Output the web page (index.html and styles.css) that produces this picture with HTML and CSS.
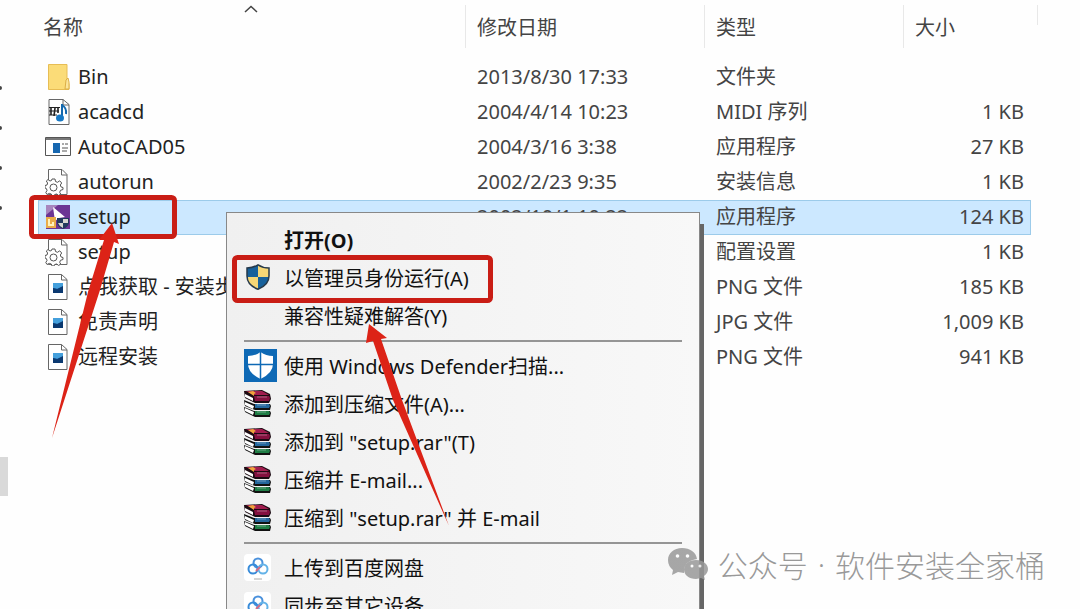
FILE: index.html
```html
<!DOCTYPE html>
<html lang="zh-CN">
<head>
    <meta charset="UTF-8">
    <meta name="viewport" content="width=device-width">
    <title>setup</title>
    <link rel="stylesheet" href="styles.css">
</head>
<body>
<svg class="defs" aria-hidden="true">
    <symbol id="gear" viewBox="0 0 26 28">
        <path d="M3.500 1.500h13.500l5 5V26.500H3.500z" fill="#fff" stroke="#666"/>
        <path d="M16.500 1.500v5.500H22" fill="none" stroke="#666"/>
        <path d="M7 11h3l.5 2.500 2 .8 2.200-1.500 2 2.200-1.400 2 .8 2L18 19.500v2l-2.500.8-.8 2 1 1.700-2 1.500-2-1.500-2 .5L9 28H7l-.7-2-2-.6L2 26.500.8 24.500 2 22.500l-.5-1.800L0 20v-2.500l2-.5.6-2-1.300-2L3 11.500l2 1.500 1.500-.5z" fill="#fff" stroke="#555"/>
        <circle cx="8.500" cy="19.500" r="3.500" fill="#fff" stroke="#555"/>
    </symbol>
    <symbol id="picture" viewBox="0 0 26 28">
        <path d="M3.500 1.500h13l5.500 5V26.500H3.500z" fill="#fff" stroke="#666"/>
        <path d="M16.500 1.500v5.500H22" fill="none" stroke="#666"/>
        <path d="M8 10h10v10H8z" fill="#1765ad"/>
        <path d="M8 10h10v4l-5 2-5-1z" fill="#45a0dc"/>
        <path d="M8 15l4 1 6-3v7H8z" fill="#0b3970"/>
    </symbol>
    <symbol id="books" viewBox="0 0 27 27">
        <path d="M0 17l10 4h16l1 2-1 4H11L1 22z" fill="#111"/>
        <path d="M11 21h14l1 2-1 2H11z" fill="#1f7d45"/>
        <path d="M1 18l9 4-1 3-8-4z" fill="#fff"/>
        <path d="M0 10l10 4h16l1 2-1 4H11L1 16z" fill="#111"/>
        <path d="M11 14h14l1 2-1 2H11z" fill="#24679c"/>
        <path d="M1 12l9 4-1 3-8-4z" fill="#fff"/>
        <path d="M0 1l18-1 8 4 1 5-2 4H11L1 8z" fill="#1b0a12"/>
        <path d="M2 1l16 0 7 4H10z" fill="#a01c4e"/>
        <path d="M10 6h15l1 2-1 3H11z" fill="#84103f"/>
        <path d="M1 4l8 4v3L1 7z" fill="#fff"/>
        <path d="M4 2l5-1 3 2-2 1v2L7 4z" fill="#f0a33c"/>
        <path d="M13 7h10M13 15h9M13 22h9" stroke="#fff" stroke-opacity=".35"/>
    </symbol>
    <symbol id="cloud" viewBox="0 0 27 27">
        <rect width="27" height="27" rx="4" fill="#fff"/>
        <g fill="none" stroke-width="2">
            <circle cx="14" cy="9" r="4.500" stroke="#4a91dc"/>
            <circle cx="9" cy="15" r="4.500" stroke="#378bd9"/>
            <circle cx="19" cy="15" r="4.500" stroke="#64b3e8"/>
            <path d="M12 17l4-4" stroke="#d66b84"/>
        </g>
        <path d="M10 25h8" stroke="#aaa"/>
    </symbol>
</svg>

<div id="app">
    <aside class="nav-edge">
        <span class="pin"></span>
        <span class="pin"></span>
        <span class="pin"></span>
        <span class="pin"></span>
        <span class="thumb"></span>
    </aside>
    <main class="files">
        <table class="file-table">
            <thead>
            <tr>
                <th class="col-name" scope="col">名称
                    <svg class="sort" viewBox="0 0 14 8"><path d="M1 7l6-5.500L13 7" fill="none" stroke="#444" stroke-width="1.500"/></svg>
                </th>
                <th class="col-date" scope="col">修改日期</th>
                <th class="col-type" scope="col">类型</th>
                <th class="col-size" scope="col">大小</th>
            </tr>
            </thead>
            <tbody>
            <tr>
                <td><div class="name">
                    <svg class="icon" viewBox="0 0 26 28"><path d="M3.500 1.500H22v18l2 1v6H3.500z" fill="#fbdc78" stroke="#e7bd54"/><path d="M20 26l1-9 2-2 1 4v7z" fill="#fbe59a" stroke="#dcae45"/></svg>
                    Bin</div></td>
                <td>2013/8/30 17:33</td><td>文件夹</td><td></td>
            </tr>
            <tr>
                <td><div class="name">
                    <svg class="icon" viewBox="0 0 26 28"><path d="M4 1.500h14l6 5V26.500H4z" fill="#fff" stroke="#666"/><path d="M18 1.500V7h6" fill="none" stroke="#666"/><path d="M4 9.500h11M4 13h10M4 17h8" stroke="#222" stroke-width="1.200"/><path d="M6 9v8M10 10l-1 8M13 9v6" stroke="#222" stroke-width="1.600"/><path d="M17 6v15M17 7q5 3 4 9" fill="none" stroke="#1468ad" stroke-width="2"/><ellipse cx="15" cy="20" rx="4" ry="3.500" fill="#1879c5"/></svg>
                    acadcd</div></td>
                <td>2004/4/14 10:23</td><td>MIDI 序列</td><td>1 KB</td>
            </tr>
            <tr>
                <td><div class="name">
                    <svg class="icon" viewBox="0 0 26 28"><path d="M.5 4.500h25v18H.5z" fill="#fff" stroke="#555"/><path d="M1 6h24" stroke="#777" stroke-width="2"/><path d="M8 10h7v10H8z" fill="#1767b0"/><path d="M17 11h2M20 11h3M17 15h6M17 18h5" stroke="#555"/></svg>
                    AutoCAD05</div></td>
                <td>2004/3/16 3:38</td><td>应用程序</td><td>27 KB</td>
            </tr>
            <tr>
                <td><div class="name"><svg class="icon"><use href="#gear"/></svg>autorun</div></td>
                <td>2002/2/23 9:35</td><td>安装信息</td><td>1 KB</td>
            </tr>
            <tr class="selected">
                <td><div class="name">
                    <svg class="icon" viewBox="0 0 26 28"><path d="M1 2h24v24H1z" fill="#6c3594"/><path d="M1 2h12L1 12z" fill="#a785be"/><path d="M8 4l12 10-6 1-4 3z" fill="#fff"/><path d="M1 14h10v11H1z" fill="#e9ac49"/><path d="M4 16v6h4v-3" fill="none" stroke="#fff2bc" stroke-width="2"/><path d="M12 15h12v5q-1 4-6 6-5-2-6-6z" fill="#223a5d"/><path d="M18 16h5v4h-5zM13 20h5v5q-4-2-5-5z" fill="#d8d7d1"/></svg>
                    setup</div></td>
                <td>2002/10/1 10:22</td><td>应用程序</td><td>124 KB</td>
            </tr>
            <tr>
                <td><div class="name"><svg class="icon"><use href="#gear"/></svg>setup</div></td>
                <td></td><td>配置设置</td><td>1 KB</td>
            </tr>
            <tr>
                <td><div class="name"><svg class="icon"><use href="#picture"/></svg>点我获取 - 安装步骤</div></td>
                <td></td><td>PNG 文件</td><td>185 KB</td>
            </tr>
            <tr>
                <td><div class="name"><svg class="icon"><use href="#picture"/></svg>免责声明</div></td>
                <td></td><td>JPG 文件</td><td>1,009 KB</td>
            </tr>
            <tr>
                <td><div class="name"><svg class="icon"><use href="#picture"/></svg>远程安装</div></td>
                <td></td><td>PNG 文件</td><td>941 KB</td>
            </tr>
            </tbody>
        </table>
    </main>

    <div class="menu" role="menu">
        <button class="item default" role="menuitem"><span class="item-icon"></span>打开(O)</button>
        <button class="item" role="menuitem">
            <span class="item-icon"><svg class="shield" viewBox="0 0 24 26"><path d="M12 .8Q17 4 23 4v8q0 9-11 13.200Q1 21 1 12V4q6 0 11-3.200z" fill="#f6d776"/><path d="M12 1v12H1V4q6 0 11-3zM12 13h11q-1 8-11 12z" fill="#17619b"/><path d="M12 .8Q17 4 23 4v8q0 9-11 13.200Q1 21 1 12V4q6 0 11-3.200z" fill="none" stroke="#26394a" stroke-width="1.500"/></svg></span>以管理员身份运行(A)
        </button>
        <button class="item" role="menuitem"><span class="item-icon"></span>兼容性疑难解答(Y)</button>
        <hr class="line">
        <button class="item" role="menuitem">
            <span class="item-icon"><svg class="defender" viewBox="0 0 33 33"><path d="M0 0h33v33H0z" fill="#0e69b5"/><path d="M16.500 3Q22 7 29 7v8q0 9-12.500 15Q4 24 4 15V7q7 0 12.500-4z" fill="#fff"/><path d="M16.500 3v27M3 15.500h27" stroke="#0e69b5" stroke-width="1.500"/></svg></span>使用 Windows Defender扫描...
        </button>
        <button class="item" role="menuitem"><span class="item-icon"><svg class="app"><use href="#books"/></svg></span>添加到压缩文件(A)...</button>
        <button class="item" role="menuitem"><span class="item-icon"><svg class="app"><use href="#books"/></svg></span>添加到 "setup.rar"(T)</button>
        <button class="item" role="menuitem"><span class="item-icon"><svg class="app"><use href="#books"/></svg></span>压缩并 E-mail...</button>
        <button class="item" role="menuitem"><span class="item-icon"><svg class="app"><use href="#books"/></svg></span>压缩到 "setup.rar" 并 E-mail</button>
        <hr class="line">
        <button class="item" role="menuitem"><span class="item-icon"><svg class="app"><use href="#cloud"/></svg></span>上传到百度网盘</button>
        <button class="item" role="menuitem"><span class="item-icon"><svg class="app"><use href="#cloud"/></svg></span>同步至其它设备</button>
    </div>

    <!-- red marks over the list and the menu -->
    <svg class="marks" width="500" height="540" aria-hidden="true">
        <g fill="none" stroke="#c91d15" stroke-width="5">
            <rect x="31.500" y="197.500" width="143" height="39" rx="3"/>
            <rect x="234.500" y="257.500" width="256" height="43" rx="3"/>
        </g>
        <g fill="#dc2317">
            <path d="M112 223L99 240L104 240L88 292L52 438L100 290L114 242L119 244z"/>
            <path d="M369 324L366 343L373 341L393 400L449 526L402 400L381 339L387 338z"/>
        </g>
    </svg>

    <div class="watermark">
        <svg class="wechat" viewBox="0 0 40 34"><path d="M14 1C6 1 0 6 0 13q0 6 5 10l-1 5 6-3 6 1q-1-12 13-14C28 5 22 1 14 1z"/><path d="M28 13c-7 0-12 4-12 9.500S21 32 28 32l5-1 4 2-1-4q4-3 4-7c0-5-5-9-12-9z"/><g fill="#fff"><circle cx="9.500" cy="9" r="1.800"/><circle cx="19.500" cy="9" r="1.800"/><circle cx="24" cy="19" r="1.500"/><circle cx="32" cy="19" r="1.500"/></g></svg>
        <span>公众号</span><span class="dot">·</span><span>软件安装全家桶</span>
    </div>
</div>
</body>
</html>
```
FILE: styles.css
```css
*{
    margin: 0;
    padding: 0;
    box-sizing: border-box;
}
html,body,#app{
    width: 100%;
    height: 100%;
    overflow: hidden;
}
body{
    background-color: #fefefe;
    color: #222;
    font-family: "Noto Sans", "Noto Sans CJK SC", sans-serif;
    font-size: 20px;
}
#app{
    position: relative;
    display: flex;
}
.defs{
    position: absolute;
    width: 0;
    height: 0;
}
/* edge of the navigation pane */
.nav-edge{
    width: 8px;
    padding-top: 86px;
    display: flex;
    flex-direction: column;
    gap: 36px;
}
.pin{
    width: 2px;
    height: 4px;
    border-radius: 0 2px 2px 0;
    background-color: #444;
}
.thumb{
    margin-top: 211px;
    height: 39px;
    background-color: #d9d9d9;
}
.files{
    flex: 1;
    padding: 0 49px 0 30px;
}
.file-table{
    width: 100%;
    table-layout: fixed;
    border-collapse: collapse;
    white-space: nowrap;
}
.file-table th{
    position: relative;
    height: 60px;
    padding: 0 0 8px 11px;
    font-weight: normal;
    text-align: left;
    color: #444;
}
.file-table th::after{
    content: "";
    position: absolute;
    top: 5px;
    right: 0;
    width: 1px;
    height: 43px;
    background-color: #e8e8e8;
}
.file-table .col-name{
    padding-left: 5px;
}
.col-date{
    width: 239px;
}
.col-type{
    width: 199px;
}
.col-size{
    width: 127px;
}
.file-table .col-size::after{
    right: -7px;
    height: 20px;
}
.sort{
    position: absolute;
    top: 5px;
    left: 50%;
    width: 14px;
    height: 8px;
    margin-left: -8px;
}
.file-table td{
    height: 35px;
    padding: 0 0 2px 11px;
    line-height: 33px;
    color: #444;
}
.file-table td:first-child{
    padding-left: 7px;
    color: #222;
}
.file-table td:last-child{
    padding-right: 7px;
    text-align: right;
}
.name{
    display: flex;
    align-items: center;
    gap: 7px;
    overflow: hidden;
}
.icon{
    flex: none;
    width: 26px;
    height: 28px;
}
.selected{
    background-color: #cce8ff;
    outline: 1px solid #9ccbea;
    outline-offset: -1px;
}
.menu{
    position: absolute;
    top: 212px;
    left: 226px;
    width: 474px;
    padding: 8px 0;
    background: linear-gradient(to right, #f0f0f0, #f8f8f8);
    border: 1px solid #888;
    box-shadow: 4px 12px 0 #666;
}
.item{
    display: flex;
    align-items: center;
    gap: 7px;
    width: 100%;
    height: 38px;
    padding: 0 17px 2px;
    border: 0;
    background: none;
    font: inherit;
    color: #111;
    text-align: left;
    white-space: nowrap;
}
.default{
    font-weight: bold;
}
.item-icon{
    flex: none;
    display: flex;
    width: 33px;
}
.shield{
    width: 24px;
    height: 26px;
    margin-left: 2px;
}
.defender{
    width: 33px;
    height: 33px;
}
.app{
    width: 27px;
    height: 27px;
}
.line{
    height: 2px;
    margin: 5px 17px;
    border: 0;
    background-color: #959595;
}
.marks{
    position: absolute;
    top: 0;
    left: 0;
    pointer-events: none;
}
.watermark{
    position: absolute;
    right: 35px;
    bottom: 23px;
    display: flex;
    align-items: center;
    gap: 10px;
    font-family: "Noto Sans CJK SC", sans-serif;
    font-size: 30px;
    line-height: 44px;
    font-weight: 300;
    color: #999;
}
.dot{
    font-family: "Noto Sans", sans-serif;
}
.wechat{
    width: 40px;
    height: 34px;
    fill: #999;
    opacity: .85;
}
```
